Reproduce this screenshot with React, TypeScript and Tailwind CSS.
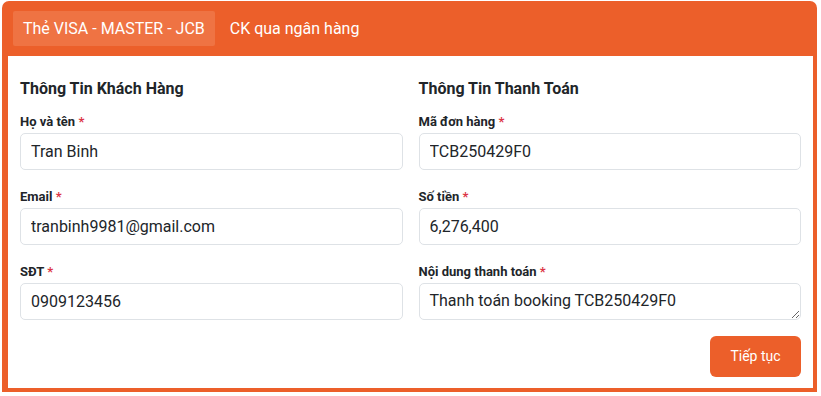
import React from 'react';

const labelClassName = "block text-[13px] font-bold leading-[20px] text-[#212529] mb-px";
const inputClassName =
  "block w-full h-[37px] px-[10px] rounded-[5px] border border-[#dee2e6] bg-white text-[16px] text-[#212529] outline-none";

function Field({ label, value, textarea }: { label: string; value: string; textarea?: boolean }) {
  return (
    <div className="mb-[17px]">
      <label className={labelClassName}>
        {label} <span className="text-[#dc3545]">*</span>
      </label>
      {textarea ? (
        <textarea
          defaultValue={value}
          rows={1}
          className={`${inputClassName} py-[5px] leading-[24px] resize-y`}
        />
      ) : (
        <input defaultValue={value} className={inputClassName} />
      )}
    </div>
  );
}

export default function App() {
  return (
    <div className="min-h-screen bg-white pt-px pl-[2px] font-['Roboto',sans-serif]">
      <div className="w-[815px] bg-[#ec5f2a] rounded-t-[7px] pl-[6px] pr-[4px] pb-[4px]">
        <div className="flex gap-[5px] h-[55px] items-center pl-[5px]">
          <button className="h-[35px] px-[10px] bg-[#ef7343] text-white text-[16px] rounded-[2px]">
            Thẻ VISA - MASTER - JCB
          </button>
          <button className="h-[35px] px-[10px] text-white text-[16px]">CK qua ngân hàng</button>
        </div>
        <div className="bg-white px-[12px] pt-[21px] pb-[11px]">
          <div className="grid grid-cols-2 gap-x-[16px]">
            <div>
              <h3 className="text-[16px] font-bold leading-[24px] text-[#212529] mb-[11px]">Thông Tin Khách Hàng</h3>
              <Field label="Họ và tên" value="Tran Binh" />
              <Field label="Email" value="tranbinh9981@gmail.com" />
              <Field label="SĐT" value="0909123456" />
            </div>
            <div>
              <h3 className="text-[16px] font-bold leading-[24px] text-[#212529] mb-[11px]">Thông Tin Thanh Toán</h3>
              <Field label="Mã đơn hàng" value="TCB250429F0" />
              <Field label="Số tiền" value="6,276,400" />
              <Field label="Nội dung thanh toán" value="Thanh toán booking TCB250429F0" textarea />
            </div>
          </div>
          <div className="flex justify-end -mt-px">
            <button className="h-[41px] w-[91px] rounded-[6px] bg-[#ec5f2a] text-white text-[14px]">Tiếp tục</button>
          </div>
        </div>
      </div>
    </div>
  );
}
